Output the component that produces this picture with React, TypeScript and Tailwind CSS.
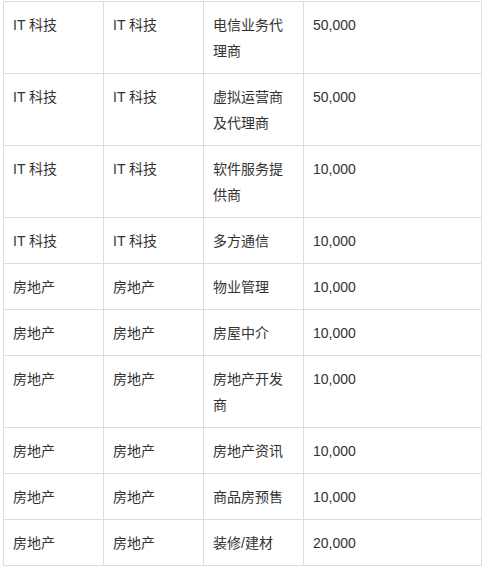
import React from "react";

const rows: [string, string, string, string][] = [
  ["IT 科技", "IT 科技", "电信业务代理商", "50,000"],
  ["IT 科技", "IT 科技", "虚拟运营商及代理商", "50,000"],
  ["IT 科技", "IT 科技", "软件服务提供商", "10,000"],
  ["IT 科技", "IT 科技", "多方通信", "10,000"],
  ["房地产", "房地产", "物业管理", "10,000"],
  ["房地产", "房地产", "房屋中介", "10,000"],
  ["房地产", "房地产", "房地产开发商", "10,000"],
  ["房地产", "房地产", "房地产资讯", "10,000"],
  ["房地产", "房地产", "商品房预售", "10,000"],
  ["房地产", "房地产", "装修/建材", "20,000"],
];

export default function App() {
  return (
    <div
      className="bg-white w-[487px] h-[573px] pl-[3px] pt-[1px] text-[#333333] text-[14px] leading-[26px]"
      style={{ fontFamily: '"Liberation Sans", "Noto Sans CJK SC", sans-serif' }}
    >
      <table className="border-collapse table-fixed w-[479px]">
        <colgroup>
          <col className="w-[100px]" />
          <col className="w-[100px]" />
          <col className="w-[100px]" />
          <col />
        </colgroup>
        <tbody>
          {rows.map((r, i) => (
            <tr key={i}>
              {r.map((c, j) => (
                <td
                  key={j}
                  className="border border-[#dddddd] align-top pl-[9px] pr-[10px] pt-[10px] pb-[9px] break-all"
                >
                  {c}
                </td>
              ))}
            </tr>
          ))}
        </tbody>
      </table>
    </div>
  );
}
